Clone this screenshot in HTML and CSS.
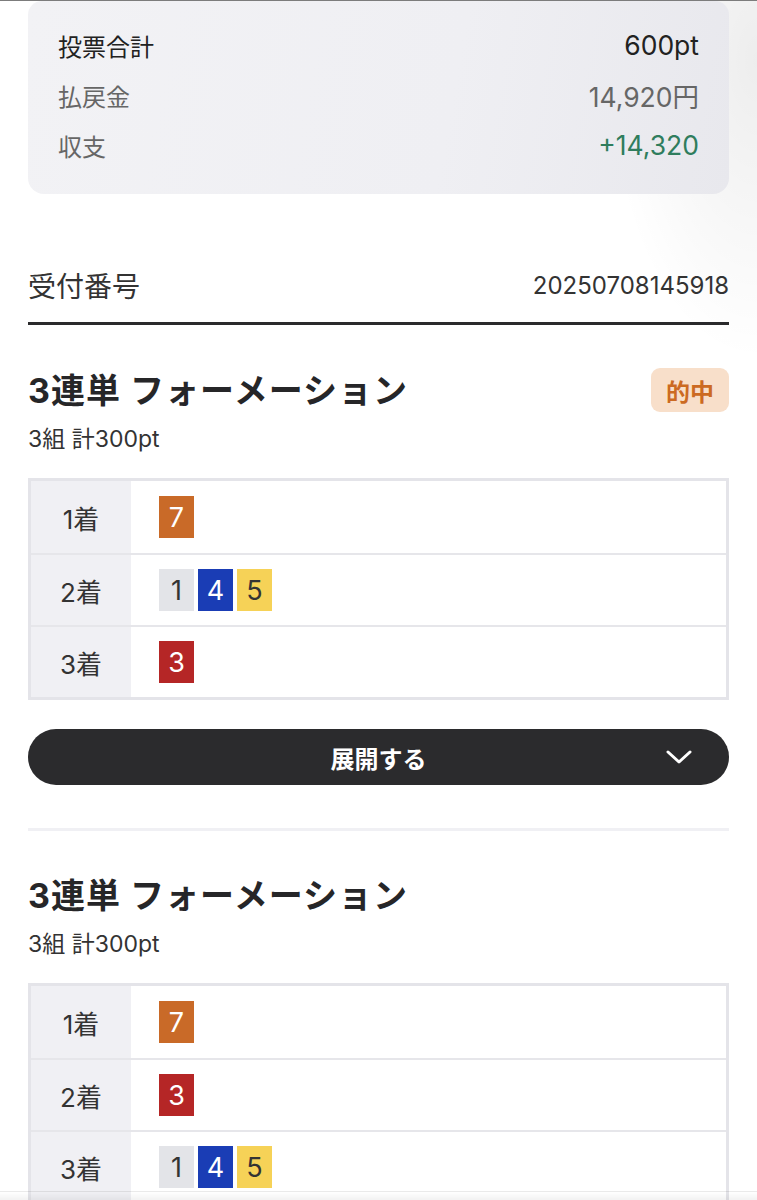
FILE: index.html
```html
<!DOCTYPE html>
<html lang="ja">
<head>
<meta charset="utf-8">
<title>投票結果</title>
<link rel="stylesheet" href="styles.css">
</head>
<body>
<div class="topline"></div>
<main class="page">
  <section class="summary">
    <div class="sum-row main"><span>投票合計</span><span class="val">600pt</span></div>
    <div class="sum-row"><span>払戻金</span><span class="val">14,920円</span></div>
    <div class="sum-row"><span>収支</span><span class="val plus">+14,320</span></div>
  </section>

  <div class="receipt"><span class="r-label">受付番号</span><span class="r-num">20250708145918</span></div>

  <section class="bet">
    <div class="bet-head">
      <h2 class="bet-title">3連単 フォーメーション</h2>
      <span class="badge">的中</span>
    </div>
    <p class="bet-sub">3組 計300pt</p>
    <div class="grid">
      <div class="row"><div class="pos">1着</div><div class="nums"><span class="chip c7">7</span></div></div>
      <div class="row"><div class="pos">2着</div><div class="nums"><span class="chip c1">1</span><span class="chip c4">4</span><span class="chip c5">5</span></div></div>
      <div class="row"><div class="pos">3着</div><div class="nums"><span class="chip c3">3</span></div></div>
    </div>
    <button class="expand" type="button"><span>展開する</span>
      <svg class="chev" width="26" height="16" viewBox="0 0 26 16"><path d="M2 3 L13 13 L24 3" fill="none" stroke="#fff" stroke-width="3" stroke-linecap="round" stroke-linejoin="round"/></svg>
    </button>
  </section>

  <hr class="divider">

  <section class="bet second">
    <div class="bet-head">
      <h2 class="bet-title">3連単 フォーメーション</h2>
    </div>
    <p class="bet-sub">3組 計300pt</p>
    <div class="grid">
      <div class="row"><div class="pos">1着</div><div class="nums"><span class="chip c7">7</span></div></div>
      <div class="row"><div class="pos">2着</div><div class="nums"><span class="chip c3">3</span></div></div>
      <div class="row"><div class="pos">3着</div><div class="nums"><span class="chip c1">1</span><span class="chip c4">4</span><span class="chip c5">5</span></div></div>
    </div>
  </section>
</main>
<div class="bottom-shade"></div>
</body>
</html>
```

FILE: styles.css
```css
html, body {
  margin: 0;
  padding: 0;
}
body {
  font-family: Inter, "Noto Sans CJK JP", sans-serif;
  color: #222;
  background:
    radial-gradient(ellipse 150px 300px at 100% 60px, rgba(0,0,0,0.07), rgba(0,0,0,0) 100%),
    #fff;
  background-repeat: no-repeat;
}
.topline {
  height: 1px;
  background: #7c7c7c;
}
.page {
  padding: 0 28px 40px;
}
.summary {
  background: linear-gradient(100deg, #f2f2f5 0%, #efeff3 60%, #e8e8ed 100%);
  border-radius: 14px 14px 16px 16px;
  padding: 19px 30px 24px;
}
.sum-row {
  display: flex;
  justify-content: space-between;
  align-items: center;
  height: 50px;
  font-size: 24px;
  color: #666;
}
.sum-row .val { font-size: 26.5px; }
.sum-row.main { color: #222; }
.sum-row .plus { color: #2f7d5d; }

.receipt {
  margin-top: 68px;
  display: flex;
  justify-content: space-between;
  align-items: center;
  height: 46px;
  padding-bottom: 14px;
  border-bottom: 3px solid #2a2a2c;
}
.r-label { font-size: 28px; color: #333; }
.r-num { font-size: 24px; color: #333; }

.bet-head {
  margin-top: 43px;
  display: flex;
  justify-content: space-between;
  align-items: center;
  height: 44px;
}
.second .bet-head { margin-top: 42px; }
.bet-title {
  margin: 0 0 3px;
  font-size: 34px;
  font-weight: 700;
  color: #262628;
  letter-spacing: 1px;
}
.badge {
  display: flex;
  align-items: center;
  justify-content: center;
  width: 78px;
  height: 44px;
  border-radius: 9px;
  background: #f8dfca;
  color: #cc6a22;
  font-size: 24px;
  font-weight: 700;
}
.bet-sub {
  margin: 13px 0 0;
  font-size: 23px;
  line-height: 28px;
  color: #333;
}
.grid {
  margin-top: 25px;
  border: 3px solid #e4e4e9;
}
.row {
  display: flex;
  height: 72px;
}
.row + .row {
  border-top: 2px solid #e6e6ea;
  height: 70px;
}
.pos {
  width: 100px;
  background: #f0f0f4;
  display: flex;
  align-items: center;
  justify-content: center;
  font-size: 26px;
  color: #333;
}
.nums {
  flex: 1;
  display: flex;
  align-items: center;
  gap: 4px;
  padding-left: 28px;
  background: #fff;
}
.chip {
  width: 35px;
  height: 42px;
  display: flex;
  align-items: center;
  justify-content: center;
  font-size: 27px;
}
.c7 { background: #c96a28; color: #fff; }
.c1 { background: #e3e4e8; color: #333; }
.c4 { background: #1a3db5; color: #fff; }
.c5 { background: #f6d257; color: #333; }
.c3 { background: #b52626; color: #fff; }

.expand {
  margin-top: 29px;
  width: 100%;
  height: 56px;
  border: none;
  border-radius: 28px;
  background: #2b2b2d;
  color: #fff;
  font-family: inherit;
  font-size: 24px;
  font-weight: 700;
  display: flex;
  align-items: center;
  justify-content: center;
  position: relative;
  padding: 0;
}
.chev {
  position: absolute;
  right: 37px;
  top: 20px;
}
.divider {
  margin: 43px 0 0;
  border: none;
  height: 3px;
  background: #f0f0f4;
}
.bottom-shade {
  position: fixed;
  left: 0;
  right: 0;
  bottom: 0;
  height: 8px;
  background: linear-gradient(to bottom, rgba(0,0,0,0), rgba(0,0,0,0.05));
  border-top: 1px solid rgba(0,0,0,0.04);
}
```
